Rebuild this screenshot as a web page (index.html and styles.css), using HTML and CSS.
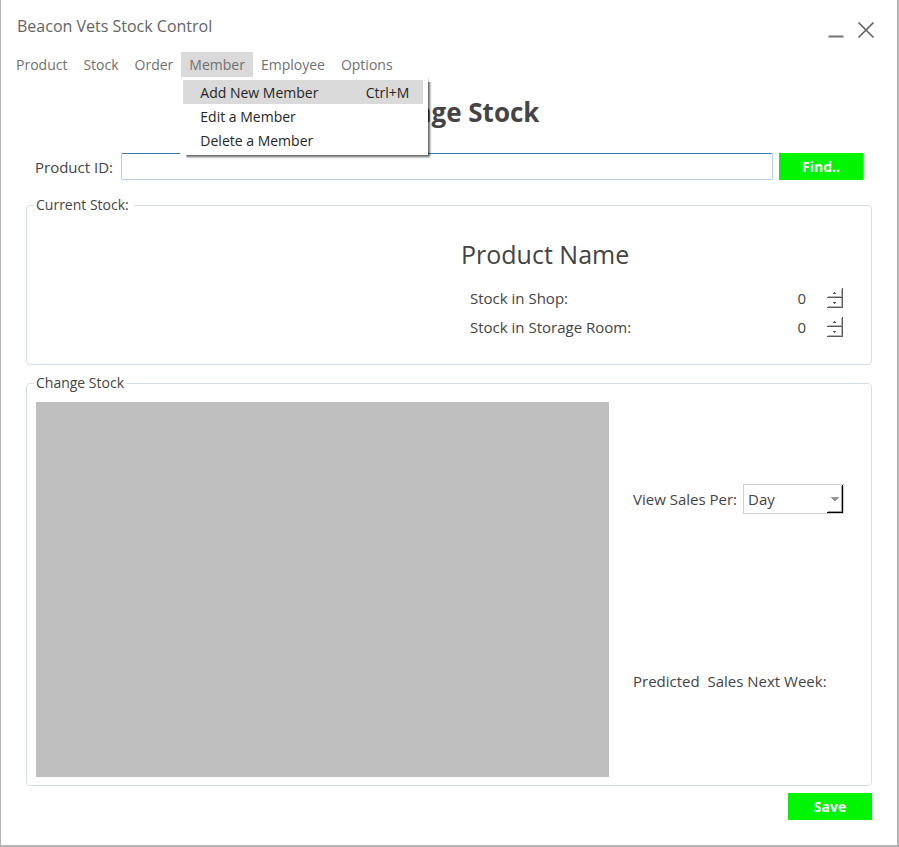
FILE: index.html
```html
<!DOCTYPE html>
<html lang="en">
<head>
<meta charset="utf-8">
<meta name="viewport" content="width=device-width, initial-scale=1">
<title>Beacon Vets Stock Control</title>
<link rel="stylesheet" href="styles.css">
</head>
<body>
<div class="window">
  <header class="titlebar">
    <span class="app-name">Beacon Vets Stock Control</span>
    <div class="window-buttons">
      <button type="button" class="icon-button" aria-label="Minimise">
        <svg width="18" height="18" viewBox="0 0 18 18"><path d="M1.5 15.5H16.5" stroke="#737373" stroke-width="2" fill="none"/></svg>
      </button>
      <button type="button" class="icon-button" aria-label="Close">
        <svg width="18" height="18" viewBox="0 0 18 18"><path d="M1.5 1.5L16.5 16.5M16.5 1.5L1.5 16.5" stroke="#5f5f62" stroke-width="1.6" fill="none"/></svg>
      </button>
    </div>
  </header>
  <nav class="menubar">
    <button type="button" class="menu-item">Product</button>
    <button type="button" class="menu-item">Stock</button>
    <button type="button" class="menu-item">Order</button>
    <div class="menu-group">
      <button type="button" class="menu-item open" aria-expanded="true">Member</button>
      <div class="menu" role="menu">
        <button type="button" role="menuitem" class="menu-row active"><span>Add New Member</span><span>Ctrl+M</span></button>
        <button type="button" role="menuitem" class="menu-row"><span>Edit a Member</span></button>
        <button type="button" role="menuitem" class="menu-row"><span>Delete a Member</span></button>
      </div>
    </div>
    <button type="button" class="menu-item">Employee</button>
    <button type="button" class="menu-item">Options</button>
  </nav>
  <main class="content">
    <h1 class="page-title">Manage Stock</h1>
    <div class="search-row">
      <label for="product-id">Product ID:</label>
      <input id="product-id" class="text-box" type="text">
      <button type="button" class="action">Find..</button>
    </div>
    <fieldset class="group">
      <legend>Current Stock:</legend>
      <div class="current">
        <div class="details">
          <h2 class="product-name">Product Name</h2>
          <div class="stock-row">
            <label for="shop">Stock in Shop:</label>
            <input id="shop" class="count" type="number" value="0">
            <svg class="spin" width="16" height="20" viewBox="0 0 16 20" shape-rendering="crispEdges"><path fill="#b4b4b4" d="M1 8h14v1H1zM14 1h1v8h-1zM1 18h14v1H1zM14 10h1v9h-1z"/><path fill="#5a5a5a" d="M0 9h16v1H0zM15 0h1v20h-1zM0 19h16v1H0zM7 4h1v1H7zM6 5h3v1H6zM6 14h3v1H6zM7 15h1v1H7z"/></svg>
          </div>
          <div class="stock-row">
            <label for="storage">Stock in Storage Room:</label>
            <input id="storage" class="count" type="number" value="0">
            <svg class="spin" width="16" height="20" viewBox="0 0 16 20" shape-rendering="crispEdges"><path fill="#b4b4b4" d="M1 8h14v1H1zM14 1h1v8h-1zM1 18h14v1H1zM14 10h1v9h-1z"/><path fill="#5a5a5a" d="M0 9h16v1H0zM15 0h1v20h-1zM0 19h16v1H0zM7 4h1v1H7zM6 5h3v1H6zM6 14h3v1H6zM7 15h1v1H7z"/></svg>
          </div>
        </div>
      </div>
    </fieldset>
    <fieldset class="group">
      <legend class="tight">Change Stock</legend>
      <div class="change">
        <div class="chart"></div>
        <div class="side">
          <div class="sales-row">
            <label for="period">View Sales Per:</label>
            <div class="select-box">
              <select id="period"><option>Day</option><option>Week</option><option>Month</option></select>
              <svg class="drop" width="17" height="28" viewBox="0 0 17 28" shape-rendering="crispEdges"><path fill="#a0a0a0" d="M1 26h15v1H1zM14 1h1v26h-1z"/><path fill="#000" d="M0 27h16v1H0zM15 0h1v28h-1z"/><path fill="#969696" d="M4 12h8v1h-1v1h-1v1h-1v1H7v-1H6v-1H5v-1H4z"/></svg>
            </div>
          </div>
          <div class="predicted">Predicted&nbsp; Sales Next Week:</div>
        </div>
      </div>
    </fieldset>
    <div class="footer"><button type="button" class="action">Save</button></div>
  </main>
</div>
</body>
</html>
```
FILE: styles.css
```css
* { box-sizing: border-box; }

body {
  margin: 0;
  font: 15px/24px "Open Sans", "Noto Sans", sans-serif;
  color: #444;
  background: #fff;
}

button, input, select { font: inherit; color: inherit; }

button {
  border: 0;
  padding: 0;
  background: none;
}

.window {
  min-height: 100vh;
  border: solid #b4b4b4;
  border-width: 0 2px 2px 1px;
}

.titlebar {
  display: flex;
  justify-content: space-between;
  height: 52px;
  padding: 14px 22px 0 16px;
}

.app-name { font-size: 16px; color: #646464; }

.window-buttons {
  display: flex;
  gap: 12px;
  padding-top: 7px;
}

.icon-button { width: 18px; height: 18px; }
.icon-button svg { display: block; }

.menubar {
  display: flex;
  padding-left: 7px;
  font-size: 14px;
}

.menu-item {
  height: 25px;
  padding: 0 8px;
  color: #717171;
}

.menu-item.open { background: #dadada; }

.menu-group { position: relative; }

.menu {
  position: absolute;
  top: 25px;
  left: -1px;
  z-index: 1;
  width: 248px;
  height: 78px;
  padding: 3px 5px 3px 3px;
  background: #fff;
  box-shadow: 2px 2px 2px rgba(0, 0, 0, 0.6);
  clip-path: polygon(0 0, 248px 0, 248px 5px, 254px 5px, 254px 84px, 6px 84px, 6px 78px, 0 78px);
}

.menu-row {
  display: flex;
  justify-content: space-between;
  width: 100%;
  height: 24px;
  padding: 1px 14px 0 17px;
  color: #262626;
}

.menu-row.active { background: #dadada; }

.content { padding: 0 25px; }

.page-title {
  margin: 0;
  padding: 17px 0 23px;
  font-size: 26px;
  line-height: 36px;
  text-align: center;
}

.search-row {
  display: flex;
  align-items: flex-start;
  gap: 6px;
  height: 28px;
  padding: 0 9px;
}

.search-row label {
  width: 80px;
  padding-top: 2px;
  white-space: nowrap;
}

.text-box {
  flex: 1;
  min-width: 0;
  height: 27px;
  border: 1px solid #b5cfe0;
  border-top-color: #3d7bad;
  border-radius: 2px;
  padding: 0 4px;
}

.action {
  width: 84px;
  height: 27px;
  background: #00f500;
  color: #fff;
  font-size: 14px;
  font-weight: 700;
}

.group {
  min-width: 0;
  margin: 12px 0 0;
  padding: 0 9px;
  border: 1px solid #d5dfe5;
  border-radius: 4px;
}

.group + .group { margin-top: 6px; }

legend {
  margin-left: -2px;
  padding: 0 5px 0 2px;
  font-size: 14px;
}

legend.tight { padding-right: 2px; }

.current {
  display: grid;
  grid-template-columns: 1fr 1fr;
  padding: 19px 0 23px;
}

.details { grid-column: 2; padding: 0 19px 0 12px; }

.product-name {
  margin: 0 0 11px;
  font-size: 25px;
  font-weight: 400;
  line-height: 36px;
}

.stock-row {
  display: flex;
  align-items: center;
  height: 29px;
  padding-left: 9px;
}

.stock-row label { flex: 1; }

.count {
  width: 60px;
  margin-right: 21px;
  padding: 0;
  border: 0;
  background: none;
  text-align: right;
  appearance: textfield;
}

.count::-webkit-inner-spin-button { display: none; }

.change {
  display: flex;
  gap: 24px;
  padding: 7px 0 8px;
}

.chart {
  flex: 1;
  height: 375px;
  background: #bfbfbf;
}

.side {
  display: flex;
  flex-direction: column;
  justify-content: space-between;
  width: 229px;
  padding: 82px 0 84px;
}

.sales-row {
  display: flex;
  align-items: center;
  gap: 6px;
  padding-right: 18px;
  white-space: nowrap;
}

.select-box { position: relative; flex: 1; }

.select-box select {
  display: block;
  width: 100%;
  height: 30px;
  padding: 0 4px;
  border: 1px solid #d0d0d0;
  border-radius: 0;
  background: #fff;
  appearance: none;
}

.drop {
  position: absolute;
  top: 1px;
  right: 0;
  pointer-events: none;
}

.footer {
  display: flex;
  justify-content: flex-end;
  padding: 7px 0 24px;
}
```
